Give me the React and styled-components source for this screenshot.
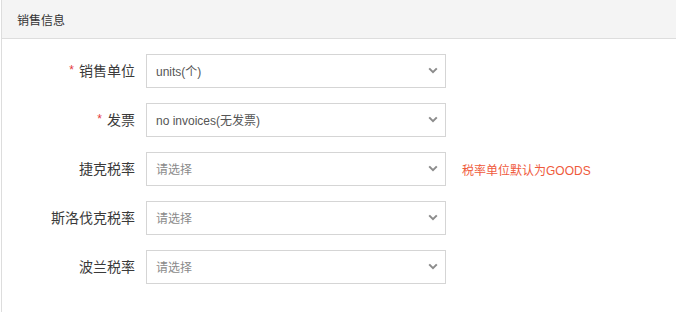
import React from "react";
import styled, { createGlobalStyle } from "styled-components";

const GlobalStyle = createGlobalStyle`
  html, body {
    margin: 0;
    padding: 0;
    background: #fff;
    overflow: hidden;
  }
  body {
    font-family: "Liberation Sans", Arial, "Noto Sans CJK SC", sans-serif;
  }
`;

const Panel = styled.div`
  margin-left: 1px;
  min-height: 312px;
  border-left: 1px solid #dddddd;
  box-sizing: border-box;
`;

const PanelHeader = styled.div`
  height: 38px;
  display: flex;
  align-items: center;
  padding-left: 15px;
  background: #f4f4f4;
  border-bottom: 1px solid #dddddd;
  font-size: 12px;
  color: #333;
`;

const Form = styled.div`
  display: flex;
  flex-direction: column;
  gap: 15px;
  padding-top: 15px;
`;

const Row = styled.div`
  display: grid;
  grid-template-columns: 133px 300px auto;
  column-gap: 11px;
  align-items: center;
  height: 34px;
`;

const Label = styled.label`
  text-align: right;
  font-size: 14px;
  color: #3a3a3a;
  margin-top: -3px;
  white-space: nowrap;
`;

const Star = styled.span`
  color: #e4393c;
  font-size: 12px;
  margin-right: 5px;
  position: relative;
  top: -2px;
`;

const Select = styled.div`
  box-sizing: border-box;
  height: 34px;
  border: 1px solid #d5d5d5;
  display: flex;
  align-items: center;
  justify-content: space-between;
  padding: 0 7px 1px 9px;
  font-size: 12px;
  color: ${p => (p.$placeholder ? "#8a8a8a" : "#555")};
  cursor: pointer;
`;

const Hint = styled.span`
  margin-left: 5px;
  font-size: 12px;
  color: #ef5a3c;
`;

const Chevron = () => (
  <svg width="10" height="7" viewBox="0 0 10 7">
    <path d="M1.2 1.4 L5 5.2 L8.8 1.4" fill="none" stroke="#8c8c8c" strokeWidth="2" />
  </svg>
);

const fields = [
  { label: "销售单位", required: true, value: "units(个)" },
  { label: "发票", required: true, value: "no invoices(无发票)" },
  { label: "捷克税率", hint: "税率单位默认为GOODS" },
  { label: "斯洛伐克税率" },
  { label: "波兰税率" }
];

const App = () => (
  <>
    <GlobalStyle />
    <Panel>
      <PanelHeader>销售信息</PanelHeader>
      <Form>
        {fields.map(f => (
          <Row key={f.label}>
            <Label>
              {f.required && <Star>*</Star>}
              {f.label}
            </Label>
            <Select $placeholder={!f.value}>
              <span>{f.value || "请选择"}</span>
              <Chevron />
            </Select>
            {f.hint ? <Hint>{f.hint}</Hint> : <span />}
          </Row>
        ))}
      </Form>
    </Panel>
  </>
);

export default App;
